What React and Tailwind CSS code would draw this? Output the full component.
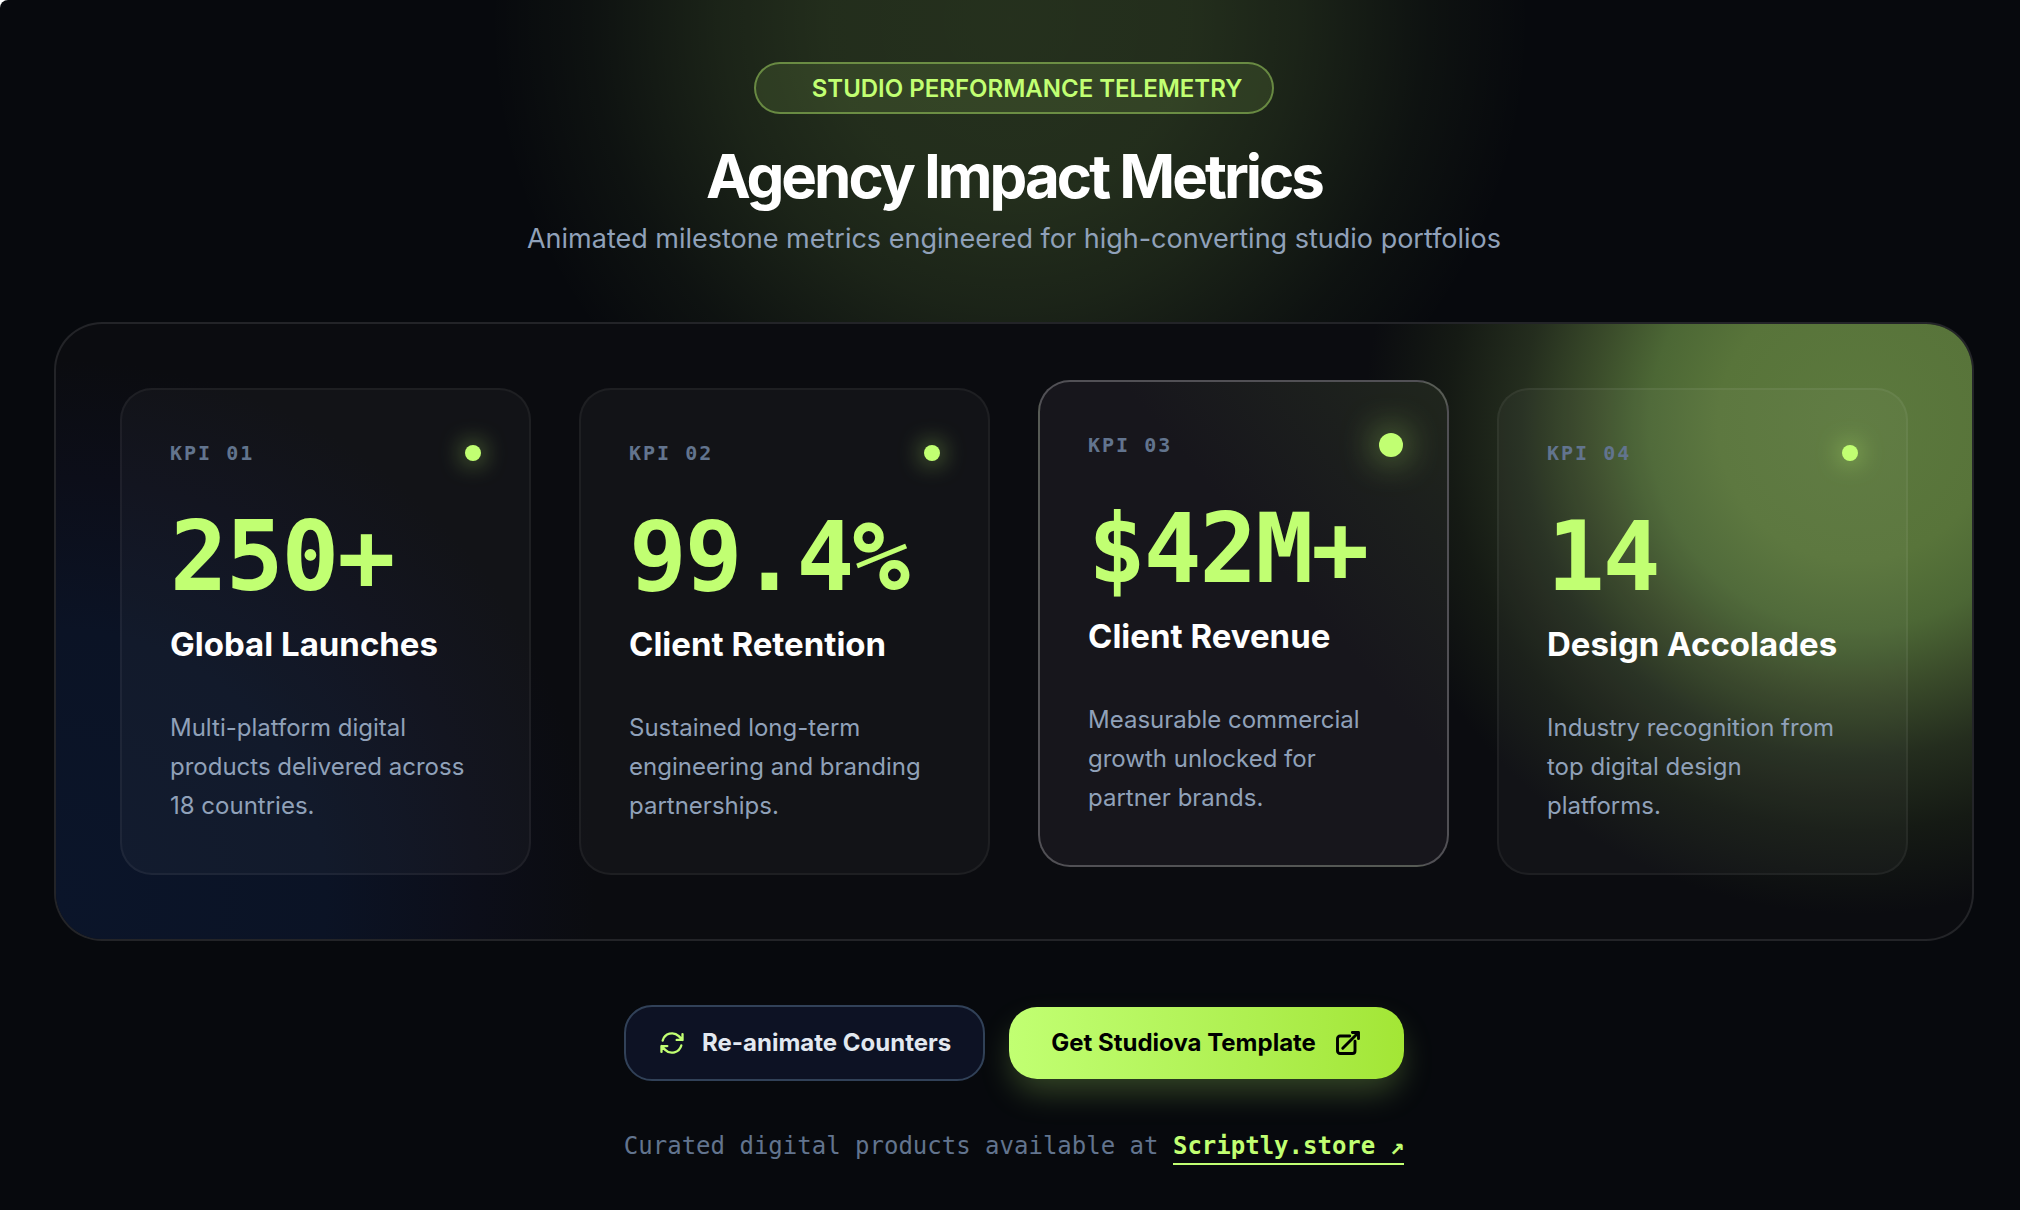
const stats = [
  { id: 'KPI 01', value: '250+', label: 'Global Launches', text: 'Multi-platform digital products delivered across 18 countries.' },
  { id: 'KPI 02', value: '99.4%', label: 'Client Retention', text: 'Sustained long-term engineering and branding partnerships.' },
  { id: 'KPI 03', value: '$42M+', label: 'Client Revenue', text: 'Measurable commercial growth unlocked for partner brands.', active: true },
  { id: 'KPI 04', value: '14', label: 'Design Accolades', text: 'Industry recognition from top digital design platforms.' },
]

function Icon({ d, className }) {
  return (
    <svg
      viewBox="0 0 24 24"
      fill="none"
      stroke="currentColor"
      strokeLinecap="round"
      strokeLinejoin="round"
      aria-hidden="true"
      className={className}
    >
      <path d={d} />
    </svg>
  )
}

const refreshPath =
  'M16.023 9.348h4.992v-.001M2.985 19.644v-4.992m0 0h4.992m-4.993 0 3.181 3.183a8.25 8.25 0 0 0 13.803-3.7M4.031 9.865a8.25 8.25 0 0 1 13.803-3.7l3.181 3.182m0-4.991v4.99'
const externalPath =
  'M13.5 6H5.25A2.25 2.25 0 0 0 3 8.25v10.5A2.25 2.25 0 0 0 5.25 21h10.5A2.25 2.25 0 0 0 18 18.75V10.5m-10.5 6L21 3m0 0h-5.25M21 3v5.25'

function StatCard({ stat }) {
  return (
    <article
      className={
        stat.active
          ? '-translate-y-2 rounded-[32px] border-2 border-white/25 bg-linear-to-bl from-[#20261d] via-[#17161c] via-40% to-[#17161c] p-12'
          : 'rounded-[32px] border-2 border-white/5 bg-white/[0.03] p-12'
      }
    >
      <div className="flex h-[30px] items-center justify-between">
        <span className="font-['DejaVu_Sans_Mono',monospace] text-[20px] leading-7 font-bold tracking-[2px] text-slate-500">
          {stat.id}
        </span>
        <span
          className={
            stat.active
              ? 'size-4 scale-150 rounded-full bg-[#c1ff72] shadow-[0_0_24px_#c1ff72cc]'
              : 'size-4 rounded-full bg-[#c1ff72] shadow-[0_0_24px_#c1ff72cc]'
          }
        />
      </div>
      <p className="mt-9 font-['DejaVu_Sans_Mono',monospace] text-[96px] leading-[106px] font-bold tracking-[-2px] text-[#c1ff72]">
        {stat.value}
      </p>
      <h2 className="mt-[14px] text-[33px] leading-10 font-bold text-white">{stat.label}</h2>
      <p className="mt-11 text-[24px] leading-[39px] text-slate-400">{stat.text}</p>
    </article>
  )
}

export default function App() {
  return (
    <div className="relative min-h-screen overflow-hidden rounded-tl-lg bg-[#07090d] pr-[46px] pl-[54px] font-[Inter,sans-serif]">
      <div className="absolute -top-[500px] left-1/2 h-[1040px] w-[1040px] -translate-x-1/2 rounded-full bg-[radial-gradient(closest-side,#c1ff7229_0%,#c1ff7226_35%,#c1ff721c_55%,#c1ff720a_80%,#c1ff7200_100%)]" />

      <header className="relative flex flex-col items-center pt-[62px] text-center">
        <p className="rounded-full border-2 border-[#c1ff72]/40 bg-[#c1ff72]/10 pt-[9px] pr-[30px] pb-[7px] pl-14 text-[24px] leading-8 font-semibold text-[#c1ff72]">
          STUDIO PERFORMANCE TELEMETRY
        </p>
        <h1 className="mt-7 text-[60px] leading-[68px] font-bold tracking-[-3px] text-white">Agency Impact Metrics</h1>
        <p className="mt-2 text-[27px] leading-[42px] text-slate-400">
          Animated milestone metrics engineered for high-converting studio portfolios
        </p>
      </header>

      <main className="relative mt-[62px] overflow-hidden rounded-[48px] border-2 border-white/10 bg-[#0b0c10] p-16">
        <div className="absolute -top-[390px] -right-[373px] size-[980px] rounded-full bg-[radial-gradient(closest-side,#5c793e_0%,#58743a_28%,#4c6735_42%,#3a4b2a_54%,#242d1e_68%,#151a14_83%,#0b0c1000_100%)]" />
        <div className="absolute -bottom-[500px] -left-[540px] size-[1080px] rounded-full bg-[radial-gradient(closest-side,#0b152a_0%,#0b1325_50%,#0c0e19_78%,#0b0c1000_100%)]" />
        <div className="relative grid grid-cols-4 gap-12">
          {stats.map((stat) => (
            <StatCard key={stat.id} stat={stat} />
          ))}
        </div>
      </main>

      <footer className="relative flex flex-col items-center">
        <div className="mt-16 flex items-center gap-6">
          <button className="flex h-[76px] items-center gap-4 rounded-[28px] border-2 border-slate-700 bg-[#0d1224] px-8 text-[24px] font-bold text-slate-200">
            <Icon d={refreshPath} className="size-7 stroke-2 text-[#c1ff72]" />
            Re-animate Counters
          </button>
          <a
            href="#template"
            className="flex h-[72px] items-center gap-[18px] rounded-[28px] bg-linear-to-r from-[#c1ff72] to-[#a3e635] px-[42px] text-[24px] font-bold text-black shadow-[0_16px_32px_-4px_#c1ff7240]"
          >
            Get Studiova Template
            <Icon d={externalPath} className="size-7 stroke-[2.5]" />
          </a>
        </div>
        <p className="mt-12 font-['DejaVu_Sans_Mono',monospace] text-[24px] leading-[34px] text-slate-500">
          Curated digital products available at{' '}
          <a href="#store" className="inline-block border-b-2 border-[#c1ff72] font-bold text-[#c1ff72]">
            Scriptly.store ↗
          </a>
        </p>
      </footer>
    </div>
  )
}
